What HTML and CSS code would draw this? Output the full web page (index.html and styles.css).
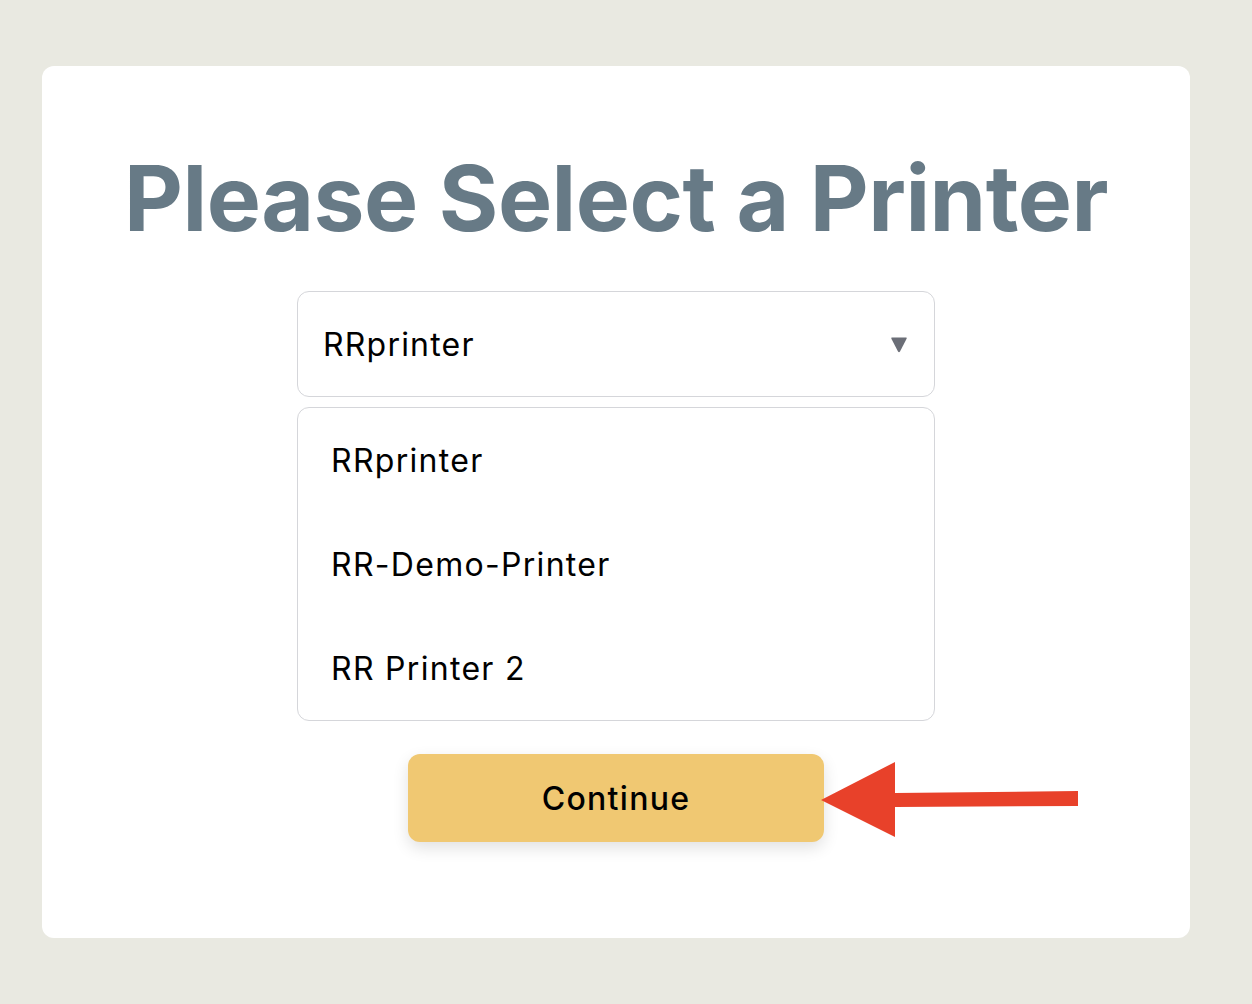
FILE: index.html
```html
<!DOCTYPE html>
<html lang="en">
<head>
    <meta charset="UTF-8">
    <title>Select Printer</title>
    <link rel="stylesheet" href="styles.css">
</head>
<body>
    <div class="card">
        <h1 class="title">Please Select a Printer</h1>

        <div class="picker">
            <div class="picker-current">
                <span>RRprinter</span>
                <svg class="caret" width="18" height="18" viewBox="0 0 18 18">
                    <path d="M2 2.5 H16 Q17.2 2.5 16.6 3.7 L10 16.5 Q9 18 8 16.5 L1.4 3.7 Q0.8 2.5 2 2.5 Z" fill="#6b6e77"/>
                </svg>
            </div>
            <ul class="picker-list">
                <li>RRprinter</li>
                <li>RR-Demo-Printer</li>
                <li>RR Printer 2</li>
            </ul>
        </div>

        <div class="actions">
            <button class="continue-btn">Continue</button>
            <svg class="pointer" width="260" height="80" viewBox="0 0 260 80">
                <polygon points="0,38 74,0 74,31 257,29 257,44 74,45 74,75" fill="#e8412a"/>
            </svg>
        </div>
    </div>
</body>
</html>
```

FILE: styles.css
```css
:root {
    --page-bg: #e9e9e1;
    --title-color: #677a86;
    --border-color: #d5d6da;
    --button-color: #f0c872;
    --radius: 12px;
}

* {
    box-sizing: border-box;
}

body {
    margin: 0;
    padding: 66px 62px 66px 42px;
    background: var(--page-bg);
    font-family: Inter, "Noto Sans", sans-serif;
    color: #000;
}

.card {
    background: #fff;
    border-radius: var(--radius);
    height: 872px;
    padding-top: 76px;
    display: flex;
    flex-direction: column;
    align-items: center;
}

.title {
    margin: 0;
    font-size: 91px;
    font-weight: 700;
    line-height: 112px;
    letter-spacing: -0.5px;
    color: var(--title-color);
}

.picker {
    width: 638px;
    margin-top: 37px;
}

.picker-current {
    height: 106px;
    border: 1.5px solid var(--border-color);
    border-radius: var(--radius);
    padding: 0 26px 0 25px;
    display: flex;
    align-items: center;
    justify-content: space-between;
    font-size: 32px;
    letter-spacing: 1.2px;
}

.picker-list {
    list-style: none;
    margin: 10px 0 0;
    padding: 0;
    border: 1.5px solid var(--border-color);
    border-radius: var(--radius);
}

.picker-list li {
    height: 104px;
    padding-left: 33px;
    display: flex;
    align-items: center;
    font-size: 32px;
    letter-spacing: 1.3px;
}

.actions {
    position: relative;
    margin-top: 33px;
}

.continue-btn {
    width: 416px;
    height: 88px;
    border: none;
    border-radius: var(--radius);
    background: var(--button-color);
    box-shadow: 0 6px 16px rgba(0, 0, 0, 0.12);
    font-family: inherit;
    font-size: 32px;
    font-weight: 500;
    letter-spacing: 1.3px;
    color: #000;
}

.pointer {
    position: absolute;
    left: 413px;
    top: 8px;
}
```
